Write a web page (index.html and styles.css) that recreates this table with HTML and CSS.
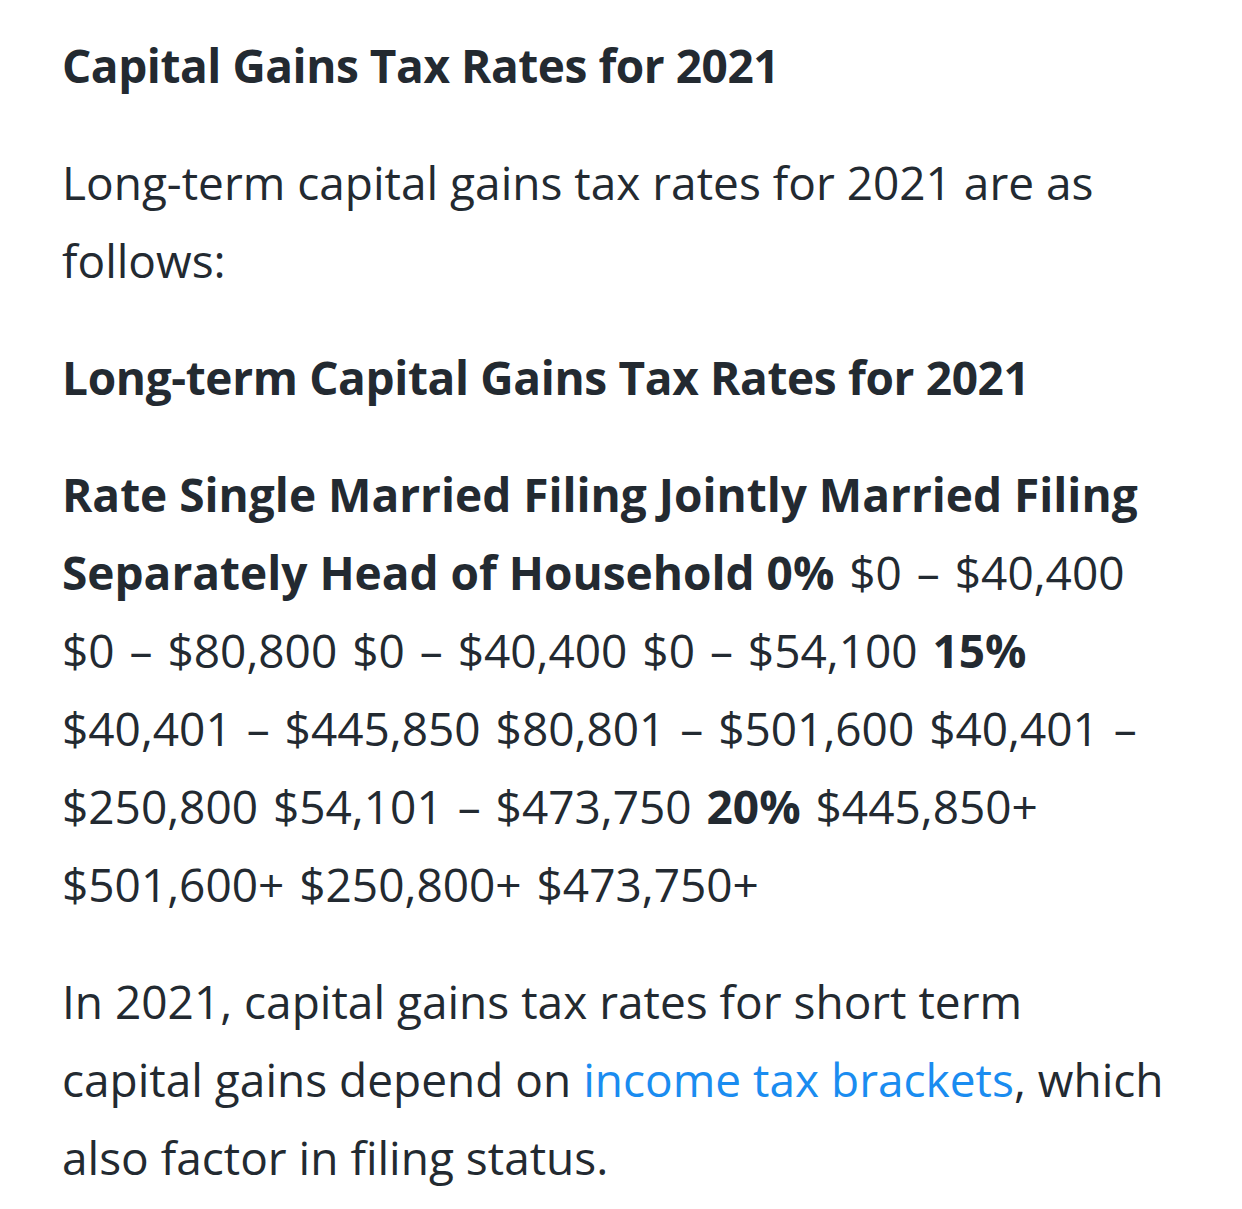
FILE: index.html
```html
<!DOCTYPE html>
<html lang="en">
<head>
<meta charset="utf-8">
<title>Capital Gains Tax Rates for 2021</title>
<link rel="stylesheet" href="styles.css">
</head>
<body>
<article class="article">
  <h2 class="heading">Capital Gains Tax Rates for 2021</h2>
  <p class="para">Long-term capital gains tax rates for 2021 are as follows:</p>
  <p class="para subheading"><strong>Long-term Capital Gains Tax Rates for 2021</strong></p>
  <p class="para rates"><strong class="cols">Rate Single Married Filing Jointly Married Filing Separately Head of Household 0%</strong> $0 – $40,400 $0 – $80,800 $0 – $40,400 $0 – $54,100 <strong>15%</strong> $40,401 – $445,850 $80,801 – $501,600 $40,401 – $250,800 $54,101 – $473,750 <strong>20%</strong> $445,850+ $501,600+ $250,800+ $473,750+</p>
  <p class="para">In 2021, capital gains tax rates for short term capital gains depend on <a class="link" href="#">income tax brackets</a>, which also factor in filing status.</p>
</article>
</body>
</html>
```
FILE: styles.css
```css
html, body {
  margin: 0;
  padding: 0;
  background: #ffffff;
}
body {
  font-family: "Open Sans", "Noto Sans", sans-serif;
  color: #232a31;
}
.article {
  padding: 26px 0 0 62px;
  width: 1110px;
}
.heading {
  margin: 0 0 39px;
  font-size: 46px;
  font-weight: 700;
  line-height: 78px;
  letter-spacing: -0.45px;
}
.para {
  margin: 0 0 39px;
  font-size: 46px;
  line-height: 78px;
  font-weight: 400;
}
.para strong {
  font-weight: 700;
}
.subheading strong {
  letter-spacing: -0.35px;
}
.rates {
  word-spacing: 3px;
}
.rates .cols {
  word-spacing: 0;
}
.link {
  color: #1a8cf0;
  text-decoration: none;
}
```
